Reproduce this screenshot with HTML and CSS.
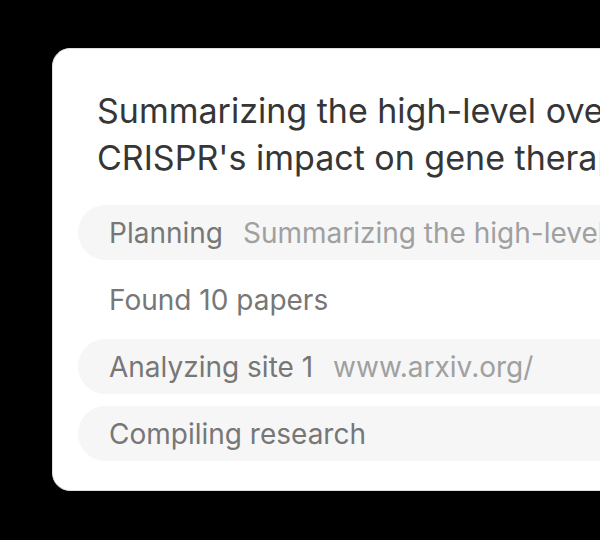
FILE: index.html
```html
<!DOCTYPE html>
<html lang="en">
<head>
    <meta charset="UTF-8">
    <meta name="viewport" content="width=device-width, initial-scale=1.0">
    <title>Research steps</title>
    <link rel="stylesheet" href="styles.css">
</head>
<body>
    <div class="card">
        <h2 class="title">Summarizing the high-level overview of<br>CRISPR's impact on gene therapy</h2>
        <ul class="steps">
            <li class="step pill"><span class="label">Planning</span><span class="detail">Summarizing the high-level overview of CRISPR</span></li>
            <li class="step"><span class="label">Found 10 papers</span></li>
            <li class="step pill"><span class="label">Analyzing site 1</span><span class="detail">www.arxiv.org/</span></li>
            <li class="step pill"><span class="label">Compiling research</span></li>
        </ul>
    </div>
</body>
</html>
```

FILE: styles.css
```css
*{
    margin: 0;
    padding: 0;
    box-sizing: border-box;
    font-family: Inter, "Noto Sans", sans-serif;
}

body{
    background: #000;
    width: 600px;
    height: 540px;
    overflow: hidden;
    padding: 48px 0 0 52px;
}

.card{
    width: 700px;
    height: 443px;
    background: #fff;
    border: 1px solid #dedede;
    border-radius: 18px;
    padding: 38px 0 0 25px;
}

.title{
    color: #363636;
    font-size: 34px;
    font-weight: 400;
    line-height: 47px;
    padding-left: 19px;
    white-space: nowrap;
}

.steps{
    list-style: none;
    margin-top: 24px;
    display: flex;
    flex-direction: column;
    gap: 12px;
}

.step{
    height: 55px;
    display: flex;
    align-items: center;
    gap: 20px;
    padding-left: 31px;
    border-radius: 28px;
    font-size: 28px;
    white-space: nowrap;
    overflow: hidden;
}

.step.pill{
    background: #f6f6f6;
}

.step .label{
    color: #777;
}

.step .detail{
    color: #a0a0a0;
}
```
